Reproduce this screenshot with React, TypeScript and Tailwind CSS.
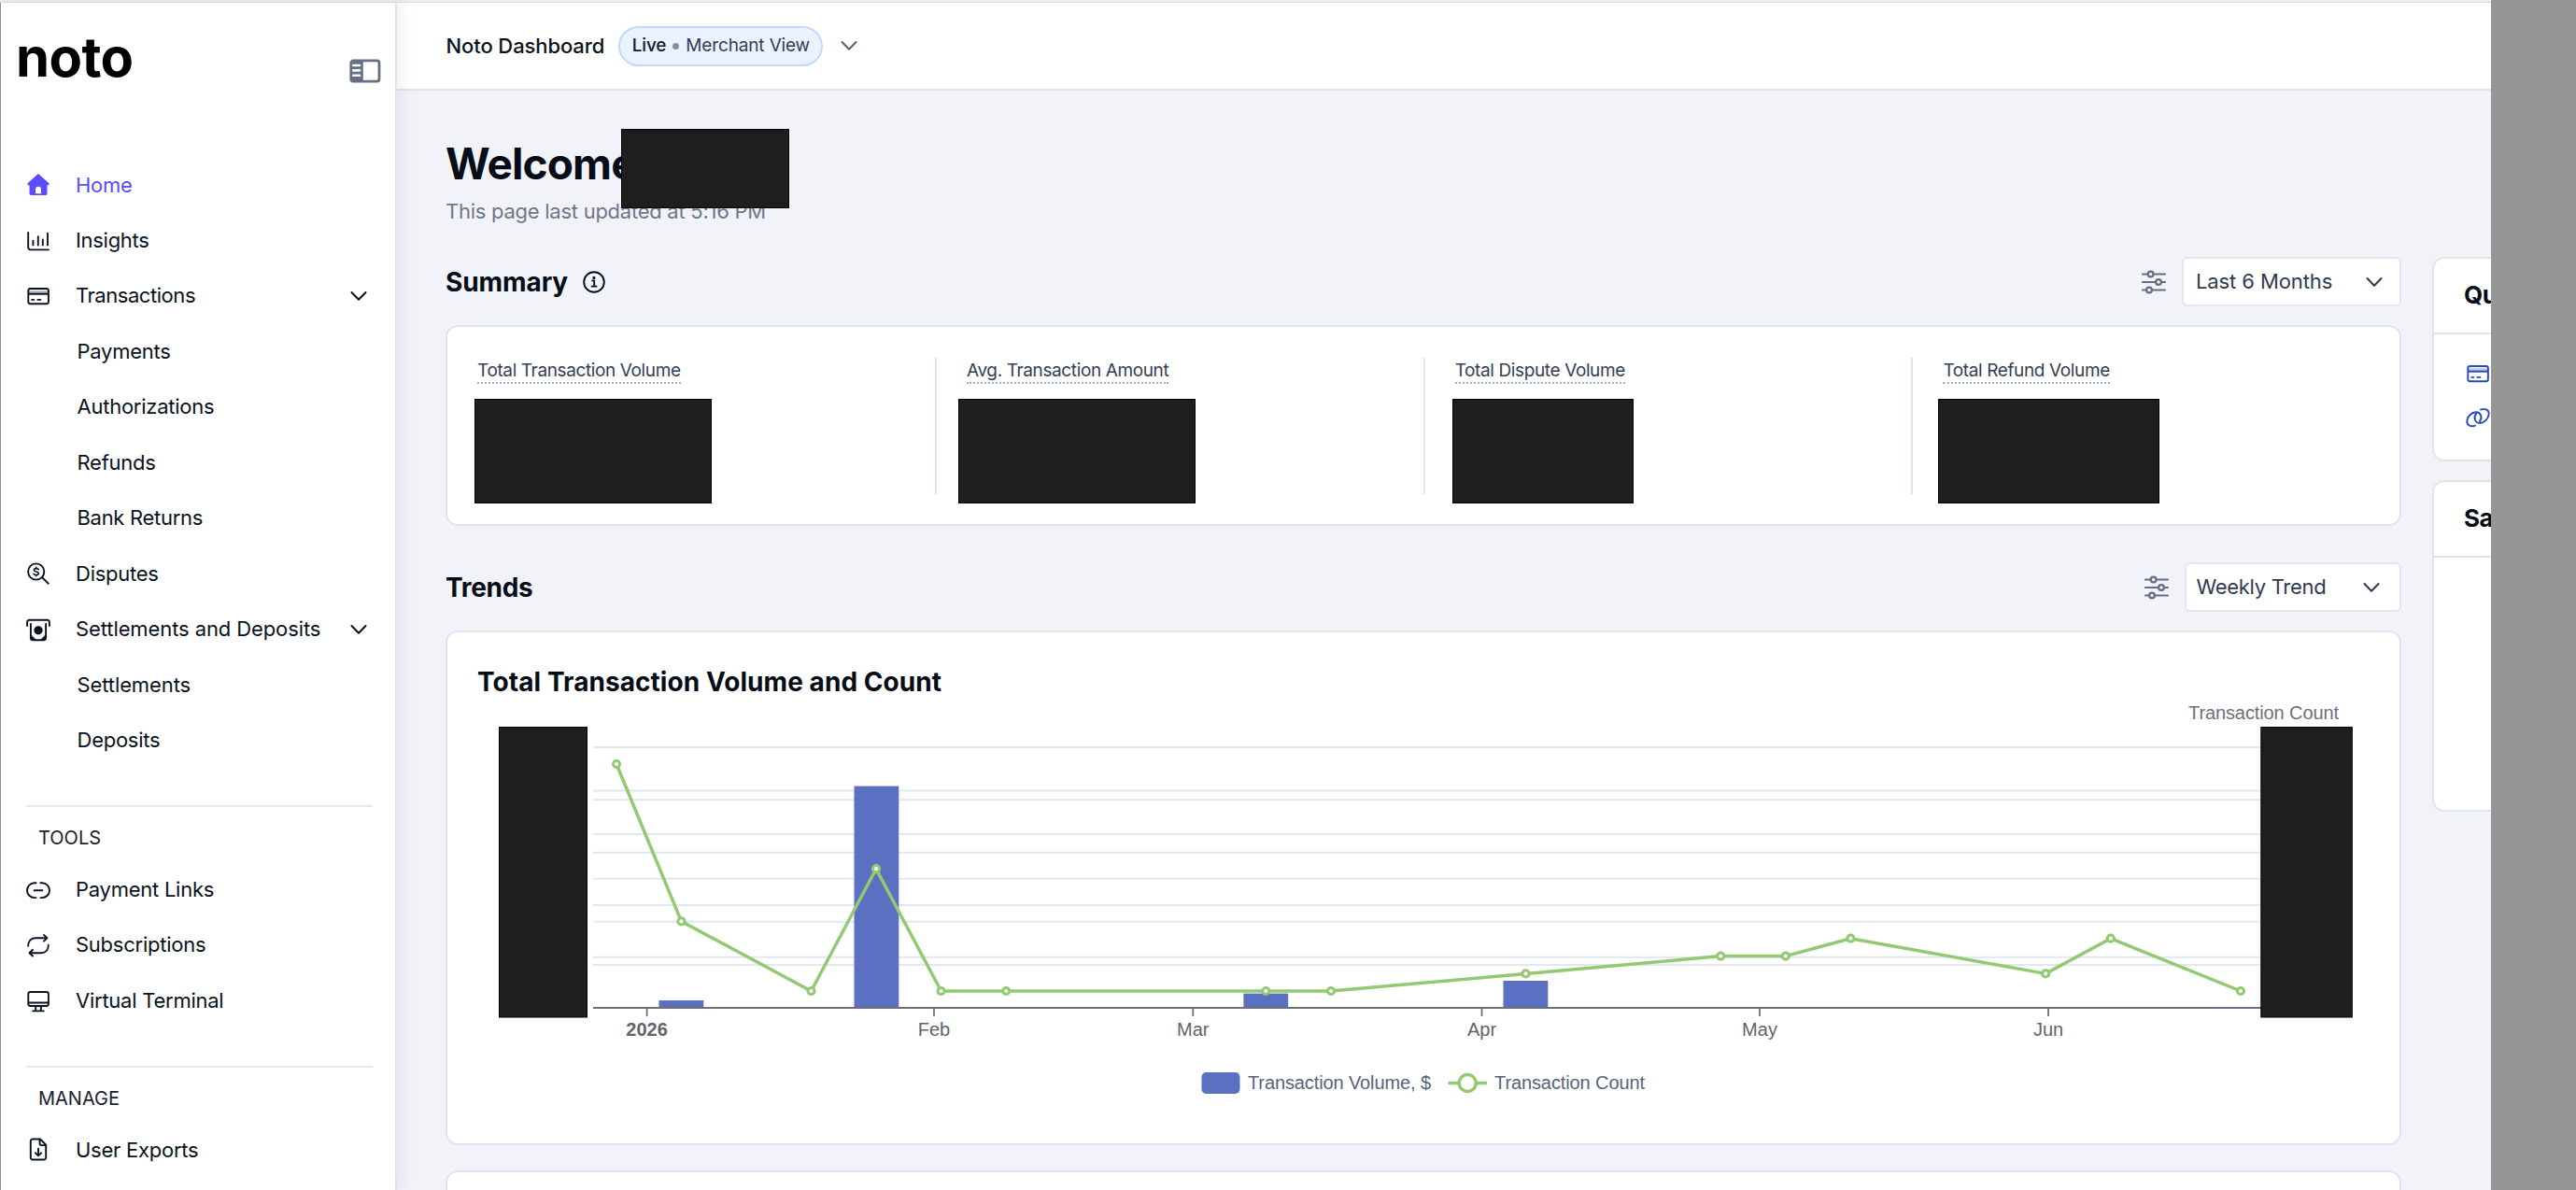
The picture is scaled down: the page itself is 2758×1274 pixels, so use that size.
import React from "react";
import clsx from "clsx";

const HomeIcon = () => (
  <svg viewBox="0 0 26 26" className="h-[26px] w-[26px] shrink-0" fill="currentColor">
    <path
      fillRule="evenodd"
      d="M11.8 1.9a1.8 1.8 0 0 1 2.4 0l10 9.2c1 .9.5 2.2-.8 2.2h-.9v9a1.8 1.8 0 0 1-1.8 1.8H5.3a1.8 1.8 0 0 1-1.8-1.8v-9h-.9c-1.3 0-1.8-1.3-.8-2.2zM10 22.3h6v-4.6a3 3 0 0 0-6 0z"
    />
  </svg>
);

const Icon = ({
  children,
  className,
}: {
  children: React.ReactNode;
  className?: string;
}) => (
  <svg
    viewBox="0 0 26 26"
    className={clsx("h-[26px] w-[26px] shrink-0", className)}
    fill="none"
    stroke="currentColor"
    strokeWidth="1.9"
    strokeLinecap="round"
    strokeLinejoin="round"
  >
    {children}
  </svg>
);

const InsightsIcon = () => (
  <Icon>
    <path d="M2.2 4v15.6a2.8 2.8 0 0 0 2.8 2.8h19M7.4 12.8v4.6M12.8 8.2v9.4M17.8 11.4v6M23 4.8v12.6" />
  </Icon>
);

const CardIcon = () => (
  <Icon>
    <rect x="2.3" y="5" width="21.6" height="16.2" rx="2.2" />
    <path d="M2.6 8.2h21" strokeOpacity=".3" />
    <path d="M2.6 10.6h21" strokeWidth="2.2" strokeLinecap="butt" />
    <path d="M6.2 16.9h2M12.4 16.9h3" />
  </Icon>
);

const DisputesIcon = () => (
  <Icon>
    <circle cx="10.7" cy="11" r="8.6" />
    <path d="M17.2 17.2l6.6 6.5" />
    <path
      d="M13.2 8.7c-.5-.8-1.4-1.1-2.5-1.1-1.4 0-2.4.7-2.4 1.7 0 2.4 5 1.1 5 3.5 0 1-1 1.7-2.5 1.7-1.2 0-2.2-.4-2.7-1.2M10.7 6.4v1.2M10.7 14.5v1.2"
      strokeWidth="1.6"
    />
  </Icon>
);

const SettlementsIcon = () => (
  <Icon>
    <path d="M1.1 9V5a2.2 2.2 0 0 1 2.2-2.2h19.4A2.2 2.2 0 0 1 24.9 5v4" />
    <path d="M4.9 7v15a2.2 2.2 0 0 0 2.2 2.2h11.8a2.2 2.2 0 0 0 2.2-2.2V7" />
    <path d="M5.5 19.5v4h4zM20.5 19.5v4h-4z" fill="currentColor" strokeWidth="1" />
    <circle cx="13" cy="13.8" r="3.7" fill="currentColor" />
  </Icon>
);

const PaymentLinkIcon = () => (
  <Icon>
    <path d="M10.6 5.3H8.9a7.9 7.9 0 0 0 0 15.8h1.7M15.4 5.3h1.7a7.9 7.9 0 0 1 0 15.8h-1.7M8.6 13.2h8.8" />
  </Icon>
);

const SubscriptionsIcon = () => (
  <Icon>
    <path d="M2.2 13.8C2.2 8.2 5.6 5.2 10 5.2h12M19 1.9l3.5 3.3-3.5 3.4" />
    <path d="M23.8 12.6c0 5.6-3.4 8.6-7.8 8.6H4M7 17.8l-3.5 3.4L7 24.5" />
  </Icon>
);

const TerminalIcon = () => (
  <Icon>
    <rect x="2.3" y="4" width="21.6" height="15" rx="2.2" />
    <path d="M2.6 15.5h21M10.2 19.5v4.500M15.8 19.5v4.500M7.2 24.4h11.6" />
  </Icon>
);

const ExportIcon = () => (
  <Icon>
    <path d="M15 1.5H7A2.2 2.2 0 0 0 4.8 3.7v17.6A2.2 2.2 0 0 0 7 23.5h12a2.2 2.2 0 0 0 2.2-2.2V7.7zM14.5 1.7v4.4a2 2 0 0 0 2 2h4.5M13 11.8v7.4M9.9 16.3l3.1 3.1 3.1-3.1" />
  </Icon>
);

const ChainIcon = () => (
  <Icon>
    <path d="M10 21.7C5 23.5 1 21 1.3 16.8C1.8 11.5 6.5 7.2 11 7.2C16 7.3 18.3 13 14.8 17.5" />
    <path d="M16 4.6C21 2.7 25 5 24.7 9.4C24.2 14.7 19.5 19 15 19C10 18.9 7.7 13.2 11.2 8.7" />
  </Icon>
);

const InfoIcon = () => (
  <Icon>
    <circle cx="13" cy="13" r="10.8" />
    <path d="M11.2 11.4h2v6M10.6 17.6h5" />
    <circle cx="12.9" cy="8.4" r=".7" fill="currentColor" />
  </Icon>
);

const SlidersIcon = () => (
  <svg
    viewBox="0 0 26 26"
    className="h-[26px] w-[26px] text-[#646e84]"
    fill="#f2f3f8"
    stroke="currentColor"
    strokeWidth="2.2"
    strokeLinecap="round"
  >
    <path d="M1 4.5h24M1 13h24M1 21.5h24" />
    <circle cx="9.6" cy="4.5" r="2.9" />
    <circle cx="18" cy="13" r="2.9" />
    <circle cx="8" cy="21.5" r="2.9" />
  </svg>
);

const CollapseIcon = () => (
  <svg viewBox="0 0 34 26" className="h-[26px] w-[34px] text-[#646e85]">
    <rect x="1.8" y="1.9" width="30.2" height="22.2" rx="2.5" fill="none" stroke="currentColor" strokeWidth="2.8" />
    <path d="M2 2h12.8v22H2z" fill="currentColor" />
    <path d="M4.2 7h6.8M4.2 12.4h6.8M4.2 17.8h6.8" stroke="#fff" strokeWidth="2.6" strokeLinecap="round" />
  </svg>
);

const Chevron = ({ className }: { className?: string }) => (
  <svg
    viewBox="0 0 18 12"
    className={clsx("h-3 w-[18px] shrink-0", className)}
    fill="none"
    stroke="currentColor"
    strokeWidth="2"
    strokeLinecap="round"
    strokeLinejoin="round"
  >
    <path d="M1.5 2l7.5 7.8L16.5 2" />
  </svg>
);

const Redacted = ({ className }: { className: string }) => (
  <div className={clsx("border border-black bg-[#1e1e1e]", className)} />
);

type Item = {
  label: string;
  icon?: React.ReactNode;
  active?: boolean;
  open?: boolean;
  tracking?: string;
};

const sections: { title?: string; items: Item[] }[] = [
  {
    items: [
      { label: "Home", icon: <HomeIcon />, active: true },
      { label: "Insights", icon: <InsightsIcon />, tracking: "tracking-[-0.3px]" },
      { label: "Transactions", icon: <CardIcon />, open: true, tracking: "tracking-[-0.45px]" },
      { label: "Payments" },
      { label: "Authorizations" },
      { label: "Refunds" },
      { label: "Bank Returns", tracking: "tracking-[-0.3px]" },
      { label: "Disputes", icon: <DisputesIcon /> },
      { label: "Settlements and Deposits", icon: <SettlementsIcon />, open: true, tracking: "tracking-[-0.1px]" },
      { label: "Settlements", tracking: "tracking-[-0.1px]" },
      { label: "Deposits" },
    ],
  },
  {
    title: "TOOLS",
    items: [
      { label: "Payment Links", icon: <PaymentLinkIcon /> },
      { label: "Subscriptions", icon: <SubscriptionsIcon /> },
      { label: "Virtual Terminal", icon: <TerminalIcon /> },
    ],
  },
  {
    title: "MANAGE",
    items: [{ label: "User Exports", icon: <ExportIcon /> }],
  },
];

const Sidebar = () => (
  <aside className="z-10 flex w-[425px] shrink-0 flex-col overflow-hidden border-r-2 border-l border-l-[#8f8f8f] border-r-[#e0e4ed] bg-white shadow-[4px_0_16px_rgba(15,23,42,0.07)]">
    <div className="flex h-[165.4px] shrink-0 justify-between pr-[15.5px] pl-[16px]">
      <div className="mt-[20px] h-[82px] text-[58px] leading-[76px] font-bold tracking-[-0.6px] text-black">
        noto
      </div>
      <div className="mt-[60px]">
        <CollapseIcon />
      </div>
    </div>
    {sections.map(({ title, items }, index) => (
      <div key={index} className={clsx("shrink-0 pr-[24px] pl-[27px]", title && "pt-[39.6px]")}>
        {title && (
          <div className="flex h-[61px] items-center border-t-2 border-[#e4e9f1] pt-[7px] pl-[13px] text-[20px] text-[#1a2230]">
            <span>{title}</span>
          </div>
        )}
        {items.map(({ label, icon, active, open, tracking }) => (
          <div
            key={label}
            className={clsx(
              "flex h-[59.45px] items-center text-[22px]",
              active ? "text-[#5b4df8]" : "text-[#0a1220]"
            )}
          >
            {icon}
            <span
              className={clsx(
                "whitespace-nowrap",
                icon ? "ml-[27px]" : "ml-[54.5px]",
                tracking || "tracking-[-0.25px]"
              )}
            >
              {label}
            </span>
            {open && <Chevron className="mr-[6.5px] ml-auto" />}
          </div>
        ))}
      </div>
    ))}
  </aside>
);

const Header = () => (
  <header className="flex h-[94px] shrink-0 items-center border-b-2 border-[#dfe3eb] bg-white pl-[52.5px] text-[22px]">
    <span className="font-medium tracking-[-0.1px] text-[#0a1220]">Noto Dashboard</span>
    <div className="ml-[14.5px] flex h-[43px] w-[219px] items-center rounded-full border-2 border-[#bfdafd] bg-[#eaf2ff] pl-[13px] text-[19px] tracking-[-0.15px]">
      <span className="font-medium text-[#111a2b]">Live</span>
      <span className="mx-[7px] h-[7px] w-[7px] rounded-full bg-[#8490a5]" />
      <span className="whitespace-nowrap text-[#333f54]">Merchant View</span>
    </div>
    <Chevron className="ml-[19px] text-[#56617a]" />
  </header>
);

const Select = ({
  label,
  className,
}: {
  label: string;
  className: string;
}) => (
  <div className="flex items-center">
    <SlidersIcon />
    <div
      className={clsx(
        "ml-[17px] flex h-[53px] items-center justify-between rounded-md border-2 border-[#e2e6ee] bg-white text-[22px] text-[#2f3a4f]",
        className
      )}
    >
      <span className="whitespace-nowrap">{label}</span>
      <Chevron />
    </div>
  </div>
);

const stats = [
  { label: "Total Transaction Volume", column: "w-[522px]", box: "ml-[-3px] w-[254px]" },
  { label: "Avg. Transaction Amount", column: "w-[522.7px] border-l-2", box: "ml-[-9px] w-[254px]" },
  { label: "Total Dispute Volume", column: "w-[522.7px] border-l-2", box: "ml-[-3px] w-[194px]" },
  { label: "Total Refund Volume", column: "flex-1 border-l-2", box: "ml-[-5px] w-[237px]" },
];

const gridLines = [800, 846.5, 856.3, 893, 912.7, 940.7, 969, 986.7, 1024.7, 1033];

const months = [
  { x: 692.6, label: "2026" },
  { x: 1000, label: "Feb" },
  { x: 1277.3, label: "Mar" },
  { x: 1586.5, label: "Apr" },
  { x: 1884, label: "May" },
  { x: 2193, label: "Jun" },
];

// [x, top] of each weekly volume bar
const bars = [
  [705.5, 1071],
  [914.5, 841.6],
  [1331.4, 1063.6],
  [1609.5, 1050],
];

const points = [
  [660, 818],
  [729.5, 986.4],
  [868.5, 1061],
  [938, 930.2],
  [1007.6, 1061],
  [1077.2, 1061],
  [1355.3, 1061],
  [1425, 1061],
  [1633.5, 1042.4],
  [1842.3, 1023.6],
  [1911.8, 1023.6],
  [1981.4, 1004.7],
  [2190.2, 1042.4],
  [2259.8, 1004.7],
  [2399, 1061],
];

const Chart = () => (
  <svg
    viewBox="479 750 2088 450"
    className="block h-[450px] w-[2088px] font-['Liberation_Sans',Arial,sans-serif] text-[20px]"
  >
    <text x="2343" y="770" fill="#6e7079" textLength="161">
      Transaction Count
    </text>
    {gridLines.map((y) => (
      <path key={y} d={`M635 ${y}H2421`} stroke="#e1e7f2" strokeWidth="1.9" />
    ))}
    {bars.map(([x, y]) => (
      <rect key={x} x={x} y={y} width="47.8" height={1079 - y} fill="#5b70c1" />
    ))}
    <path d="M635 1079H2421" stroke="#6e7079" strokeWidth="1.8" />
    <path d="M2375 1079H2421" stroke="#5b70c1" strokeWidth="1.5" strokeOpacity=".6" />
    {months.map(({ x, label }, index) => (
      <g key={label}>
        <path d={`M${x} 1079v9`} stroke="#6e7079" strokeWidth="1.8" />
        <text
          x={x}
          y="1109"
          fill="#62646d"
          textAnchor="middle"
          fontWeight={index === 0 ? 700 : 400}
        >
          {label}
        </text>
      </g>
    ))}
    <polyline
      points={points.map((p) => p.join(",")).join(" ")}
      fill="none"
      stroke="#94c973"
      strokeWidth="3.5"
      strokeLinejoin="bevel"
    />
    {points.map(([x, y]) => (
      <circle key={x} cx={x} cy={y} r="3.6" fill="#fff" stroke="#94c973" strokeWidth="3" />
    ))}
    <rect x="1286.5" y="1148" width="41" height="23" rx="5" fill="#5b70c1" />
    <text x="1336" y="1166" fill="#56637b" textLength="196">
      Transaction Volume, $
    </text>
    <path d="M1550.5 1159.5H1592" stroke="#94c973" strokeWidth="3.5" />
    <circle cx="1571.2" cy="1159.5" r="9" fill="#fff" stroke="#94c973" strokeWidth="3.4" />
    <text x="1600" y="1166" fill="#56637b" textLength="161">
      Transaction Count
    </text>
    <rect x="534.5" y="778.5" width="94" height="310.5" fill="#1e1e1e" stroke="#000" />
    <rect x="2420.8" y="778.5" width="97.5" height="310.5" fill="#1e1e1e" stroke="#000" />
  </svg>
);

const card = "rounded-[13px] border-2 border-[#e0e4ec] bg-white";

const App = () => {
  return (
    <div className="flex h-[1274px] w-[2758px] overflow-hidden bg-[#969696] font-['Inter',sans-serif]">
      <div className="flex w-[2667px] flex-col overflow-hidden">
        <div className="h-[3px] shrink-0 border-b border-[#dcdcdc] bg-[#ededed]" />
        <div className="flex min-h-0 flex-1">
          <Sidebar />
          <div className="flex min-w-0 flex-1 flex-col overflow-hidden bg-[#f2f3f8]">
            <Header />
            <main className="pt-[50px] pl-[52px]">
              <div className="relative">
                <h1 className="h-14 text-[46px] leading-[56px] font-bold tracking-[-0.9px] text-[#050d18]">
                  Welcome
                </h1>
                <p className="mt-[9px] h-7 text-[22px] leading-7 tracking-[-0.26px] text-[#6d778c]">
                  This page last updated at 5:16 PM
                </p>
                <Redacted className="absolute top-[-9px] left-[188px] h-[85px] w-[180px]" />
              </div>

              <div className="mt-[35px] flex w-max gap-[33px]">
                <div className="w-[2094px]">
                  <div className="flex items-center justify-between">
                    <div className="flex items-center gap-[15px] text-[#050d18]">
                      <h2 className="text-[28px] font-bold tracking-[-0.1px]">Summary</h2>
                      <InfoIcon />
                    </div>
                    <Select
                      label="Last 6 Months"
                      className="w-[235px] pr-[18.5px] pl-[13px] tracking-[-0.1px]"
                    />
                  </div>

                  <div className={clsx(card, "mt-[20px] flex h-[215px] py-[32.5px]")}>
                    {stats.map(({ label, column, box }) => (
                      <div key={label} className={clsx("border-[#e0e4ee] pl-8", column)}>
                        <div className="h-7 w-max border-b-2 border-dotted border-[#a3adbe] pt-px text-[19px] leading-[26px] tracking-[-0.38px] text-[#333f54]">
                          {label}
                        </div>
                        <Redacted className={clsx("mt-4 h-[112px]", box)} />
                      </div>
                    ))}
                  </div>

                  <div className="mt-[39px] flex items-center justify-between">
                    <h2 className="text-[28px] font-bold tracking-[-0.3px] text-[#050d18]">
                      Trends
                    </h2>
                    <Select
                      label="Weekly Trend"
                      className="w-[232px] pr-[21px] pl-[10.5px] tracking-[-0.3px]"
                    />
                  </div>

                  <div className={clsx(card, "mt-[20px] h-[551px]")}>
                    <h3 className="mt-[33px] h-10 pl-8 text-[28px] leading-10 font-bold tracking-[0.06px] text-[#050d18]">
                      Total Transaction Volume and Count
                    </h3>
                    <Chart />
                  </div>
                  <div className={clsx(card, "mt-[27px] h-[200px]")} />
                </div>

                <div className="flex w-[400px] flex-col gap-[20.5px]">
                  <div className={clsx(card, "h-[218.5px]")}>
                    <h3 className="flex h-[81px] items-center border-b-2 border-[#e0e4ec] pb-[2px] pl-[32px] text-[26px] font-bold tracking-[-0.5px] text-[#050d18]">
                      Qu
                    </h3>
                    <div className="flex flex-col gap-[21px] pt-[29px] pl-[34px] text-[#2449c0]">
                      <CardIcon />
                      <ChainIcon />
                    </div>
                  </div>
                  <div className={clsx(card, "h-[355px]")}>
                    <h3 className="flex h-[81px] items-center border-b-2 border-[#e0e4ec] pb-[2px] pl-[32px] text-[26px] font-bold tracking-[-0.5px] text-[#050d18]">
                      Sa
                    </h3>
                  </div>
                </div>
              </div>
            </main>
          </div>
        </div>
      </div>
    </div>
  );
};

export default App;
